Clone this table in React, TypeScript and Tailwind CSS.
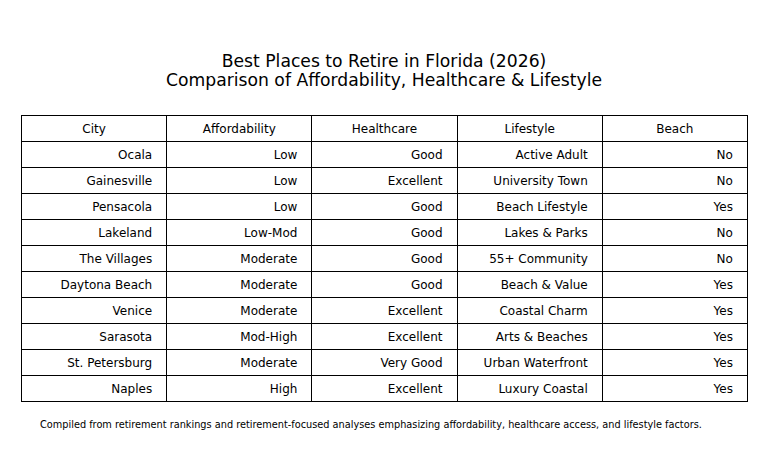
const headers = ['City', 'Affordability', 'Healthcare', 'Lifestyle', 'Beach'];

const rows = [
  ['Ocala', 'Low', 'Good', 'Active Adult', 'No'],
  ['Gainesville', 'Low', 'Excellent', 'University Town', 'No'],
  ['Pensacola', 'Low', 'Good', 'Beach Lifestyle', 'Yes'],
  ['Lakeland', 'Low-Mod', 'Good', 'Lakes & Parks', 'No'],
  ['The Villages', 'Moderate', 'Good', '55+ Community', 'No'],
  ['Daytona Beach', 'Moderate', 'Good', 'Beach & Value', 'Yes'],
  ['Venice', 'Moderate', 'Excellent', 'Coastal Charm', 'Yes'],
  ['Sarasota', 'Mod-High', 'Excellent', 'Arts & Beaches', 'Yes'],
  ['St. Petersburg', 'Moderate', 'Very Good', 'Urban Waterfront', 'Yes'],
  ['Naples', 'High', 'Excellent', 'Luxury Coastal', 'Yes'],
];

const App = () => {
  return (
    <div
      className="w-[768px] h-[476px] bg-white text-black overflow-hidden"
      style={{ fontFamily: '"DejaVu Sans", sans-serif' }}
    >
      {/* Title */}
      <div className="pt-[52px] h-[115px] text-center text-[17.2px] leading-[18.5px]">
        <div>Best Places to Retire in Florida (2026)</div>
        <div>Comparison of Affordability, Healthcare &amp; Lifestyle</div>
      </div>

      {/* Table */}
      <div className="ml-[21px] w-[727px] grid grid-cols-[repeat(5,145.2px)] border-l border-t border-black text-[12px]">
        {headers.map(h => (
          <div
            key={h}
            className="h-[26px] border-r border-b border-black flex items-center justify-center"
          >
            {h}
          </div>
        ))}
        {rows.map(row =>
          row.map((cell, i) => (
            <div
              key={row[0] + i}
              className="h-[26px] border-r border-b border-black flex items-center justify-end pr-[14px] whitespace-nowrap"
            >
              {cell}
            </div>
          ))
        )}
      </div>

      {/* Footer note */}
      <div className="mt-[17px] ml-[40px] text-[9.76px] leading-[12px] whitespace-nowrap">
        Compiled from retirement rankings and retirement-focused analyses emphasizing affordability, healthcare access, and lifestyle factors.
      </div>
    </div>
  );
};

export default App;
